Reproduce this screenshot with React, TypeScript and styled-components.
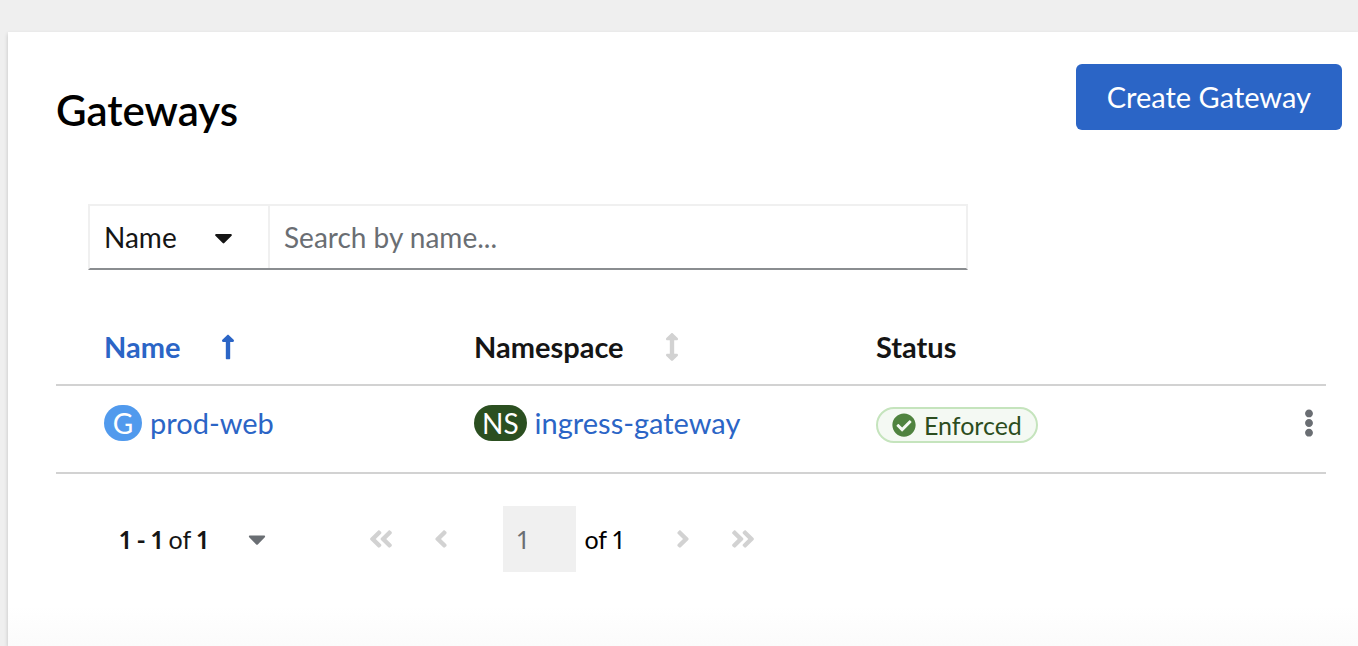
import React, { useState } from 'react';
import styled, { createGlobalStyle } from 'styled-components';
import {
  FaAngleDoubleLeft,
  FaAngleDoubleRight,
  FaAngleLeft,
  FaAngleRight,
  FaCaretDown,
  FaCheckCircle,
  FaEllipsisV,
} from 'react-icons/fa';

const GlobalStyle = createGlobalStyle`
  *, *::before, *::after { box-sizing: border-box; }
  html, body { margin: 0; }
  body {
    background: #efefef;
    color: #151515;
    font-family: Lato, "Open Sans", sans-serif;
    font-size: 28px;
    line-height: 42px;
  }
  button, input, select { font: inherit; color: inherit; margin: 0; }
  button { border: 0; background: none; padding: 0; cursor: pointer; }
  button:disabled { cursor: default; }
`;

const Page = styled.div`
  display: flex;
  min-height: 100vh;
  padding: 32px 0 0 8px;
`;

const Card = styled.main`
  flex: 1;
  min-width: 0;
  padding: 32px 16px 32px 48px;
  background: linear-gradient(to top, #fbfbfb, #fff 40px);
  box-shadow: 0 2px 4px rgba(3, 3, 3, 0.2);
`;

const Header = styled.header`
  display: flex;
  align-items: flex-start;
  justify-content: space-between;
`;

const Title = styled.h1`
  margin: 20px 0 0;
  color: #000;
  font-size: 42px;
  font-weight: 600;
  line-height: 52px;
`;

const PrimaryButton = styled.button`
  padding: 12px 31px;
  border-radius: 6px;
  background: #2b65c6;
  color: #fff;
  font-size: 29px;
`;

const Toolbar = styled.form`
  display: flex;
  max-width: 880px;
  margin: 68px 0 0 32px;
  border: 2px solid #f0f0f0;
  border-bottom-color: #8a8d90;
`;

const FilterSelect = styled.label`
  display: grid;
  align-items: center;
  width: 180px;
  border-right: 2px solid #f0f0f0;

  > * { grid-area: 1 / 1; }
  > svg { justify-self: end; margin-right: 30px; pointer-events: none; }
`;

const Select = styled.select`
  width: 100%;
  height: 62px;
  padding: 0 14px;
  appearance: none;
  border: 0;
  background: transparent;
`;

const SearchInput = styled.input`
  flex: 1;
  min-width: 0;
  height: 62px;
  padding: 0 14px;
  border: 0;
  background: transparent;

  &::placeholder { color: #6a6e73; opacity: 1; }
`;

const Table = styled.table`
  width: calc(100% - 16px);
  margin-top: 40px;
  table-layout: fixed;
  border-collapse: separate;
  border-spacing: 0;
`;

const HeadCell = styled.th<{ $active?: boolean }>`
  height: 76px;
  padding: 0 16px;
  border-bottom: 2px solid #d2d2d2;
  color: ${({ $active }) => ($active ? '#2b65c6' : '#151515')};
  font-size: 29px;
  font-weight: 700;
  text-align: left;

  &:first-child { padding-left: 48px; }
`;

const ActionHead = styled.th`
  width: 64px;
  padding: 0;
  border-bottom: 2px solid #d2d2d2;
`;

const SortButton = styled.button<{ $active?: boolean }>`
  display: flex;
  align-items: center;
  gap: 41px;
  font-weight: 700;

  > svg { color: ${({ $active }) => ($active ? '#2b65c6' : '#d2d2d2')}; }
`;

const SortIcon = styled.svg`
  width: 14px;
  height: 28px;
  fill: currentColor;
`;

const Cell = styled.td`
  height: 88px;
  padding: 16px 16px 0;
  border-bottom: 2px solid #d2d2d2;
  vertical-align: top;

  &:first-child { padding-left: 48px; }
`;

const ActionCell = styled(Cell)`
  padding: 16px 0 0;
`;

const Resource = styled.div`
  display: flex;
  align-items: center;
  gap: 8px;
`;

const ResourceBadge = styled.span<{ $color: string }>`
  min-width: 38px;
  height: 36px;
  padding: 0 8px;
  border-radius: 18px;
  background: ${({ $color }) => $color};
  color: #fff;
  line-height: 36px;
  text-align: center;
`;

const Link = styled.a`
  color: #2b65c6;
  font-size: 29px;
  text-decoration: none;

  &:hover { text-decoration: underline; }
`;

const StatusLabel = styled.span`
  display: flex;
  align-items: center;
  gap: 8px;
  width: fit-content;
  height: 36px;
  margin-top: 5px;
  padding: 0 14px;
  border: 2px solid #c5e4bd;
  border-radius: 18px;
  background: #f4f9f3;
  color: #2c4d20;
  font-size: 25px;

  > svg { color: #4f833f; }
`;

const KebabButton = styled.button`
  display: flex;
  align-items: center;
  justify-content: center;
  width: 34px;
  height: 42px;
  margin-left: auto;
  color: #6a6e73;
`;

const Pagination = styled.nav`
  display: flex;
  align-items: center;
  margin: 32px 0 0 64px;
  font-size: 25px;
  font-variant-numeric: proportional-nums;
`;

const RangeButton = styled.button`
  display: flex;
  align-items: center;
  gap: 36px;
  margin-right: 80px;

  > svg { color: #6a6e73; }
`;

const PageButton = styled.button`
  display: flex;
  align-items: center;
  justify-content: center;
  width: 60px;
  height: 66px;
  color: #d2d2d2;
  font-size: 28px;
`;

const PageField = styled.label`
  display: flex;
  align-items: center;
  gap: 8px;
  margin: 0 30px 0 32px;
  color: #000;
`;

const PageInput = styled.input`
  width: 73px;
  height: 66px;
  padding: 0 14px;
  border: 0;
  border-radius: 0;
  background: #f0f0f0;

  &:disabled { color: #6a6e73; }
`;

const AscendingIcon = () => (
  <SortIcon viewBox="0 0 256 512" aria-hidden>
    <path d="M88 166.059V468c0 6.627 5.373 12 12 12h56c6.627 0 12-5.373 12-12V166.059h46.059c21.382 0 32.09-25.851 16.971-40.971l-86.059-86.059c-9.373-9.373-24.569-9.373-33.941 0l-86.059 86.059c-15.119 15.119-4.411 40.971 16.971 40.971H88z" />
  </SortIcon>
);

const UnsortedIcon = () => (
  <SortIcon viewBox="0 0 256 512" aria-hidden>
    <path d="M214.059 377.941H168V134.059h46.059c21.382 0 32.09-25.851 16.971-40.971L144.971 7.029c-9.373-9.373-24.568-9.373-33.941 0L24.971 93.088c-15.119 15.119-4.411 40.971 16.971 40.971H88v243.882H41.941c-21.382 0-32.09 25.851-16.971 40.971l86.059 86.059c9.373 9.373 24.568 9.373 33.941 0l86.059-86.059c15.12-15.119 4.412-40.971-16.97-40.971z" />
  </SortIcon>
);

const gateways = [{ name: 'prod-web', namespace: 'ingress-gateway', status: 'Enforced' }];

export default function App() {
  const [query, setQuery] = useState('');

  return (
    <>
      <GlobalStyle />
      <Page>
        <Card>
          <Header>
            <Title>Gateways</Title>
            <PrimaryButton type="button">Create Gateway</PrimaryButton>
          </Header>

          <Toolbar role="search">
            <FilterSelect>
              <Select aria-label="Filter by">
                <option>Name</option>
                <option>Namespace</option>
              </Select>
              <FaCaretDown size={29} aria-hidden />
            </FilterSelect>
            <SearchInput
              type="text"
              aria-label="Search by name"
              placeholder="Search by name..."
              value={query}
              onChange={(event) => setQuery(event.target.value)}
            />
          </Toolbar>

          <Table>
            <thead>
              <tr>
                <HeadCell $active aria-sort="ascending">
                  <SortButton $active type="button">
                    Name
                    <AscendingIcon />
                  </SortButton>
                </HeadCell>
                <HeadCell>
                  <SortButton type="button">
                    Namespace
                    <UnsortedIcon />
                  </SortButton>
                </HeadCell>
                <HeadCell>Status</HeadCell>
                <ActionHead aria-label="Actions" />
              </tr>
            </thead>
            <tbody>
              {gateways.map(({ name, namespace, status }) => (
                <tr key={name}>
                  <Cell>
                    <Resource>
                      <ResourceBadge $color="#519aed">G</ResourceBadge>
                      <Link href="#gateway">{name}</Link>
                    </Resource>
                  </Cell>
                  <Cell>
                    <Resource>
                      <ResourceBadge $color="#2b4f20">NS</ResourceBadge>
                      <Link href="#namespace">{namespace}</Link>
                    </Resource>
                  </Cell>
                  <Cell>
                    <StatusLabel>
                      <FaCheckCircle size={24} aria-hidden />
                      {status}
                    </StatusLabel>
                  </Cell>
                  <ActionCell>
                    <KebabButton type="button" aria-label="Gateway actions">
                      <FaEllipsisV size={28} />
                    </KebabButton>
                  </ActionCell>
                </tr>
              ))}
            </tbody>
          </Table>

          <Pagination aria-label="Pagination">
            <RangeButton type="button">
              <span>
                <b>1 - 1</b> of <b>1</b>
              </span>
              <FaCaretDown size={28} aria-hidden />
            </RangeButton>
            <PageButton type="button" disabled aria-label="First page">
              <FaAngleDoubleLeft />
            </PageButton>
            <PageButton type="button" disabled aria-label="Previous page">
              <FaAngleLeft />
            </PageButton>
            <PageField>
              <PageInput type="text" aria-label="Current page" value="1" disabled readOnly />
              of 1
            </PageField>
            <PageButton type="button" disabled aria-label="Next page">
              <FaAngleRight />
            </PageButton>
            <PageButton type="button" disabled aria-label="Last page">
              <FaAngleDoubleRight />
            </PageButton>
          </Pagination>
        </Card>
      </Page>
    </>
  );
}
